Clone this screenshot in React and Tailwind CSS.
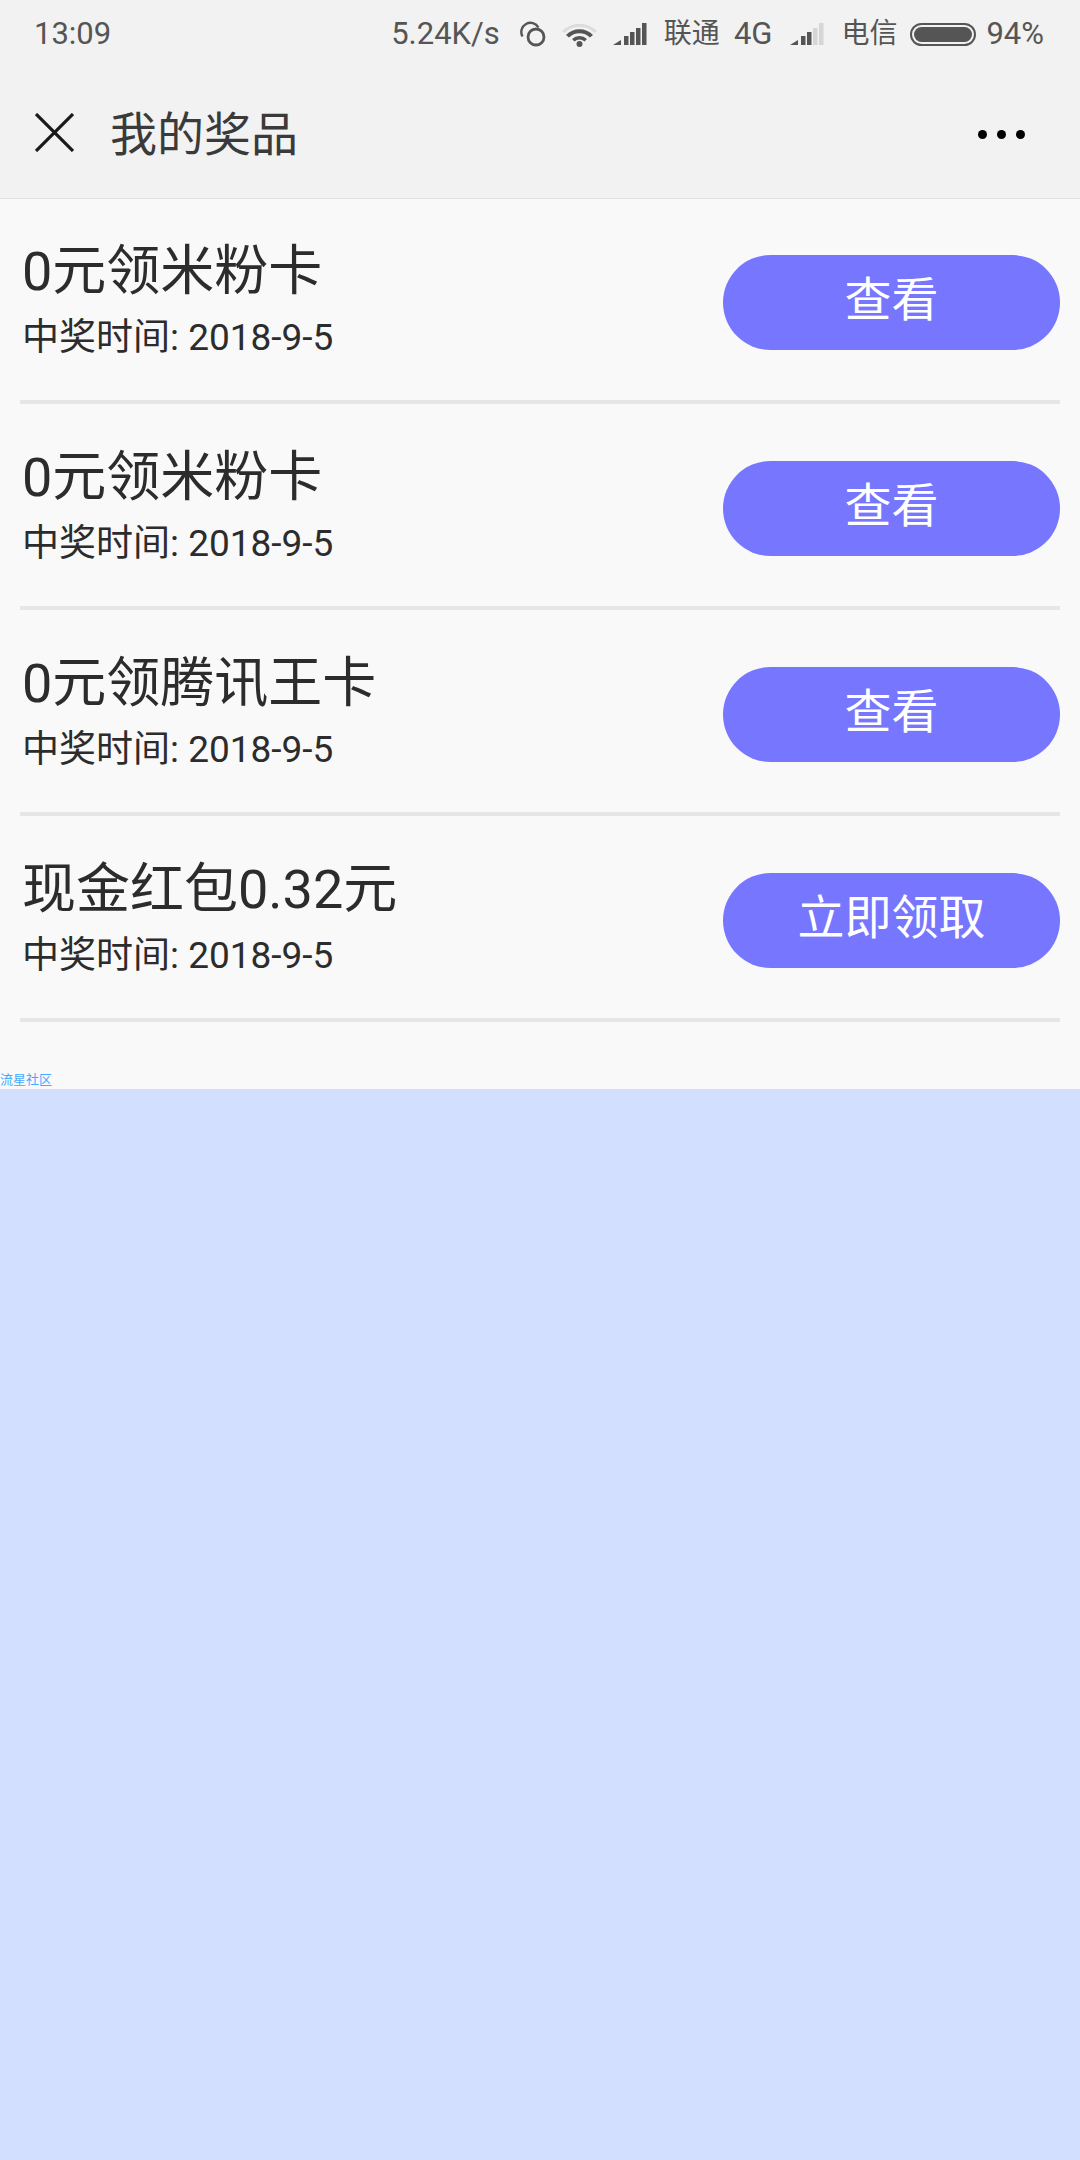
import React from 'react';

const FONT = "font-['Roboto','Noto_Sans_CJK_SC',sans-serif]";

const prizes = [
  { title: '0元领米粉卡', action: '查看' },
  { title: '0元领米粉卡', action: '查看' },
  { title: '0元领腾讯王卡', action: '查看' },
  { title: '现金红包0.32元', action: '立即领取' },
];

function Signal({ filled }) {
  const bars = [
    { x: 11, h: 9 },
    { x: 17, h: 13 },
    { x: 23, h: 17 },
    { x: 29, h: 22 },
  ];
  return (
    <svg width="34" height="22" viewBox="0 0 34 22" className="block mt-[-1px]">
      <path d="M0 22 L8 17 V22 Z" fill="#555" />
      {bars.map((b, i) => (
        <rect key={i} x={b.x} y={22 - b.h} width="4.5" height={b.h} fill={i < filled ? '#555' : '#d6d6d6'} />
      ))}
    </svg>
  );
}

function StatusBar() {
  return (
    <div className="h-[68px] flex items-center justify-between pl-[34px] pr-[36px] text-[31px] text-[#555]">
      <span>13:09</span>
      <div className="flex items-center">
        <span>5.24K/s</span>
        <svg width="28" height="26" viewBox="0 0 28 26" className="ml-[18px] block">
          <path d="M4.5 15.5 A7.5 7.5 0 1 1 20.5 6.5" fill="none" stroke="#555" strokeWidth="2.4" />
          <circle cx="18" cy="16" r="8" fill="none" stroke="#555" strokeWidth="2.8" />
        </svg>
        <svg width="35" height="25" viewBox="0 0 35 25" className="ml-[16px] block">
          <path d="M0 9 A25 25 0 0 1 35 9 L32.5 11 A21 21 0 0 0 2.5 11 Z" fill="#dcdcdc" />
          <path d="M4 13 A19 19 0 0 1 31 13 L28 15.5 A15 15 0 0 0 7 15.5 Z" fill="#555" />
          <path d="M10 17 A11 11 0 0 1 25 17 L22.5 19.5 A7.5 7.5 0 0 0 12.5 19.5 Z" fill="#555" />
          <circle cx="17.5" cy="22" r="3" fill="#555" />
        </svg>
        <div className="ml-[16px]"><Signal filled={4} /></div>
        <span className="ml-[17px] text-[28px]">联通</span>
        <span className="ml-[14px]">4G</span>
        <div className="ml-[18px]"><Signal filled={2} /></div>
        <span className="ml-[17px] text-[28px]">电信</span>
        <div className="ml-[13px] w-[66px] h-[23px] rounded-full border-2 border-[#555] p-[2px]">
          <div className="w-full h-full rounded-full bg-[#555]" />
        </div>
        <span className="ml-[10px]">94%</span>
      </div>
    </div>
  );
}

function NavBar() {
  return (
    <div className="h-[130px] flex items-center pl-[35px] pr-[55px]">
      <svg width="39" height="39" viewBox="0 0 39 39" className="block mb-[2px]">
        <path d="M1 1 L38 38 M38 1 L1 38" stroke="#1a1a1a" strokeWidth="3.2" fill="none" />
      </svg>
      <span className="ml-[36px] text-[47px] leading-none text-[#3a3a3a] mt-[2px]">我的奖品</span>
      <div className="ml-auto flex gap-[10px] mt-[2px]">
        <span className="w-[9px] h-[9px] rounded-full bg-black" />
        <span className="w-[9px] h-[9px] rounded-full bg-black" />
        <span className="w-[9px] h-[9px] rounded-full bg-black" />
      </div>
    </div>
  );
}

function PrizeRow({ title, action }) {
  return (
    <div className="h-[206px] mx-[20px] border-b-[4px] border-[#e6e6e6] flex items-center justify-between">
      <div className="ml-[2px] pt-[4px]">
        <div className="text-[54px] leading-[66px] text-[#2c2c2c]">{title}</div>
        <div className="text-[37px] leading-[50px] text-[#2c2c2c] mt-[8px]">中奖时间: 2018-9-5</div>
      </div>
      <button className="w-[337px] h-[95px] rounded-full bg-[#7676ff] text-white text-[47px] leading-none flex items-center justify-center mt-[7px] pb-[6px]">
        {action}
      </button>
    </div>
  );
}

export default function App() {
  return (
    <div className={`${FONT} w-[1080px] h-[2160px] bg-[#d3dfff] flex flex-col`}>
      <div className="relative bg-[#f2f2f2] border-b-[1px] border-[#e0e0e0]">
        <StatusBar />
        <NavBar />
      </div>
      <div className="bg-[#f9f9f9] flex flex-col -mt-[1px] h-[891px]">
        {prizes.map((p, i) => (
          <PrizeRow key={i} title={p.title} action={p.action} />
        ))}
        <div className="mt-auto text-[13px] leading-[16px] text-[#45aaff] pb-[1px]">流星社区</div>
      </div>
    </div>
  );
}
